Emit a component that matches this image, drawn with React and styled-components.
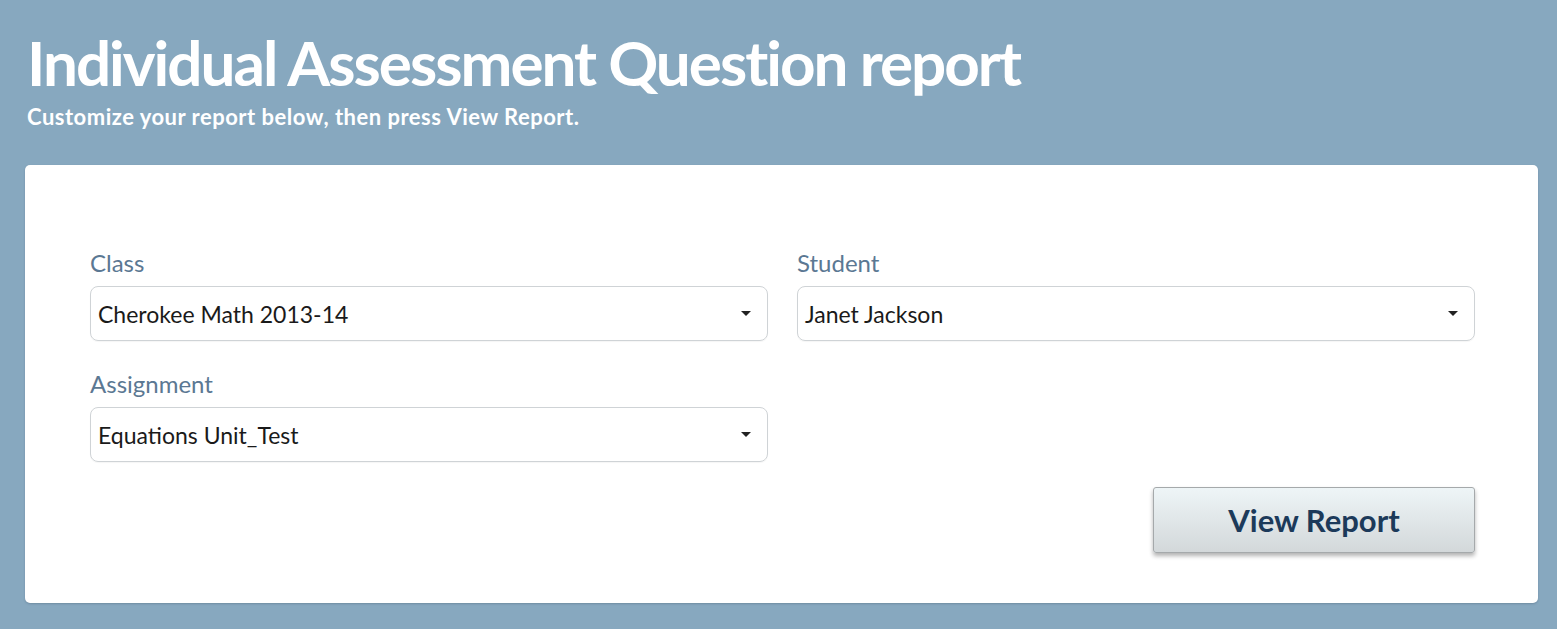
import React from 'react';
import styled, { createGlobalStyle } from 'styled-components';

const GlobalStyle = createGlobalStyle`
  html, body {
    margin: 0;
    padding: 0;
    background: #87a8bf;
  }
  body {
    font-family: Lato, "Liberation Sans", sans-serif;
  }
`;

const Page = styled.div`
  padding: 27px 19px 26px 25px;
  min-height: 629px;
  box-sizing: border-box;
`;

const Header = styled.header`
  padding-left: 2px;
  margin-bottom: 34px;
`;

const Title = styled.h1`
  margin: 0;
  font-size: 62px;
  line-height: 70px;
  font-weight: 700;
  color: #fff;
  letter-spacing: -2px;
`;

const Subtitle = styled.p`
  margin: 6px 0 0;
  font-size: 22px;
  line-height: 28px;
  font-weight: 700;
  color: #fff;
  letter-spacing: 0.5px;
`;

const Card = styled.section`
  background: #fff;
  border-radius: 5px;
  padding: 85px 63px 50px 65px;
  box-shadow: 0 1px 2px rgba(40, 60, 80, 0.25);
`;

const Grid = styled.div`
  display: grid;
  grid-template-columns: 1fr 1fr;
  column-gap: 29px;
  row-gap: 30px;
`;

const Field = styled.div`
  display: flex;
  flex-direction: column;
  gap: 10px;
`;

const Label = styled.label`
  font-size: 24px;
  line-height: 26px;
  color: #5b7893;
`;

const SelectBox = styled.div`
  height: 55px;
  box-sizing: border-box;
  border: 1px solid #cfd3d6;
  border-radius: 8px;
  display: flex;
  align-items: center;
  justify-content: space-between;
  padding: 0 16px 0 7px;
  font-size: 23px;
  color: #1a1a1a;
  box-shadow: 0 1px 1px rgba(0, 0, 0, 0.04);
`;

const Caret = styled.span`
  width: 0;
  height: 0;
  border-left: 5px solid transparent;
  border-right: 5px solid transparent;
  border-top: 5px solid #222;
`;

const Actions = styled.div`
  display: flex;
  justify-content: flex-end;
  margin-top: 25px;
`;

const Button = styled.button`
  width: 322px;
  height: 66px;
  border: 1px solid #a5a9ab;
  border-radius: 3px;
  background: linear-gradient(#eef5f7, #d3d8da);
  box-shadow: 0 3px 4px rgba(0, 0, 0, 0.3);
  font-family: inherit;
  font-size: 31px;
  font-weight: 700;
  color: #1c3a5a;
  cursor: pointer;
`;

function Select({ label, value }) {
  return (
    <Field>
      <Label>{label}</Label>
      <SelectBox>
        <span>{value}</span>
        <Caret />
      </SelectBox>
    </Field>
  );
}

export default function App() {
  return (
    <Page>
      <GlobalStyle />
      <Header>
        <Title>Individual Assessment Question report</Title>
        <Subtitle>Customize your report below, then press View Report.</Subtitle>
      </Header>
      <Card>
        <Grid>
          <Select label="Class" value="Cherokee Math 2013-14" />
          <Select label="Student" value="Janet Jackson" />
          <Select label="Assignment" value="Equations Unit_Test" />
        </Grid>
        <Actions>
          <Button>View Report</Button>
        </Actions>
      </Card>
    </Page>
  );
}
